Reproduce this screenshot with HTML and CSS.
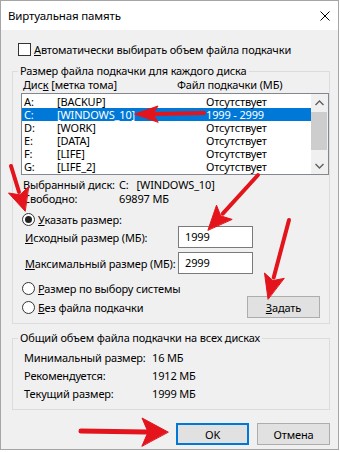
FILE: index.html
```html
<!DOCTYPE html>
<html lang="ru">
<head>
    <meta charset="UTF-8">
    <title>Виртуальная память</title>
    <link rel="stylesheet" href="styles.css">
</head>
<body>
    <div class="window">
        <!-- заголовок -->
        <div class="titlebar">
            <span class="title">Виртуальная память</span>
            <svg class="close" width="10" height="10" viewBox="0 0 10 10">
                <path d="M0.5 0.5 L9.5 9.5 M9.5 0.5 L0.5 9.5" stroke="#000" stroke-width="1" fill="none"/>
            </svg>
        </div>

        <div class="content">
            <div class="check-row">
                <span class="checkbox"></span>
                <span><u>А</u>втоматически выбирать объем файла подкачки</span>
            </div>

            <!-- размер для каждого диска -->
            <fieldset class="group">
                <legend>Размер файла подкачки для каждого диска</legend>
                <div class="list-head">
                    <span>Дис<u>к</u> [метка тома]</span>
                    <span>Файл подкачки (МБ)</span>
                </div>
                <div class="listbox">
                    <div class="rows">
                        <div class="row"><span>A:</span><span>[BACKUP]</span><span>Отсутствует</span></div>
                        <div class="row selected"><span>C:</span><span>[WINDOWS_10]</span><span>1999 - 2999</span></div>
                        <div class="row"><span>D:</span><span>[WORK]</span><span>Отсутствует</span></div>
                        <div class="row"><span>E:</span><span>[DATA]</span><span>Отсутствует</span></div>
                        <div class="row"><span>F:</span><span>[LIFE]</span><span>Отсутствует</span></div>
                        <div class="row"><span>G:</span><span>[LIFE_2]</span><span>Отсутствует</span></div>
                    </div>
                    <div class="scrollbar">
                        <div class="sb-arrow">
                            <svg width="9" height="6" viewBox="0 0 9 6"><path d="M0.5 5 L4.5 1 L8.5 5" stroke="#606060" stroke-width="1.4" fill="none"/></svg>
                        </div>
                        <div class="sb-thumb"></div>
                        <div class="sb-space"></div>
                        <div class="sb-arrow">
                            <svg width="9" height="6" viewBox="0 0 9 6"><path d="M0.5 1 L4.5 5 L8.5 1" stroke="#606060" stroke-width="1.4" fill="none"/></svg>
                        </div>
                    </div>
                </div>

                <div class="info">
                    <div class="info-row"><span>Выбранный диск:</span><span>C:<span class="gap"></span>[WINDOWS_10]</span></div>
                    <div class="info-row"><span>Свободно:</span><span>69897 МБ</span></div>
                </div>

                <div class="radio-row first">
                    <span class="radio checked"></span>
                    <span><u>У</u>казать размер:</span>
                </div>
                <div class="size-row">
                    <span class="size-label"><u>И</u>сходный размер (МБ):</span>
                    <div class="input">1999</div>
                </div>
                <div class="size-row second">
                    <span class="size-label"><u>М</u>аксимальный размер (МБ):</span>
                    <div class="input">2999</div>
                </div>

                <div class="bottom-row">
                    <div class="radios">
                        <div class="radio-row">
                            <span class="radio"></span>
                            <span><u>Р</u>азмер по выбору системы</span>
                        </div>
                        <div class="radio-row">
                            <span class="radio"></span>
                            <span><u>Б</u>ез файла подкачки</span>
                        </div>
                    </div>
                    <button class="btn btn-set"><u>З</u>адать</button>
                </div>
            </fieldset>

            <!-- общий объем -->
            <fieldset class="group total">
                <legend>Общий объем файла подкачки на всех дисках</legend>
                <div class="total-row"><span>Минимальный размер:</span><span>16 МБ</span></div>
                <div class="total-row"><span>Рекомендуется:</span><span>1912 МБ</span></div>
                <div class="total-row"><span>Текущий размер:</span><span>1999 МБ</span></div>
            </fieldset>

            <div class="buttons">
                <button class="btn default">OK</button>
                <button class="btn">Отмена</button>
            </div>
        </div>
    </div>

    <!-- красные стрелки поверх окна -->
    <svg class="arrows" width="340" height="452" viewBox="0 0 340 452">
        <g fill="#e3141b" stroke="#e3141b" stroke-linecap="round" stroke-linejoin="round">
            <!-- к диску C -->
            <line x1="204" y1="113" x2="154" y2="114" stroke-width="4"/>
            <polygon points="135,114 158,106 153,114 158,122" stroke-width="1"/>
            <!-- к переключателю -->
            <line x1="11" y1="166" x2="19" y2="192" stroke-width="4"/>
            <polygon points="25,211 8.5,193 20,194.8 28.5,186.8" stroke-width="1"/>
            <!-- к исходному размеру -->
            <line x1="258" y1="175" x2="222.8" y2="213.7" stroke-width="4"/>
            <polygon points="208,230 216.5,205.2 220.8,215.9 231.8,219.3" stroke-width="1"/>
            <!-- к кнопке Задать -->
            <line x1="289" y1="220" x2="273.7" y2="277.5" stroke-width="4"/>
            <polygon points="268,299 264.5,273 272.9,280.6 283.9,278.4" stroke-width="1"/>
            <!-- к OK -->
            <line x1="81" y1="431" x2="146" y2="432" stroke-width="5"/>
            <polygon points="168,432 142,418 148,432 142,446" stroke-width="1"/>
        </g>
    </svg>
</body>
</html>
```

FILE: styles.css
```css
* {
    box-sizing: border-box;
}

body {
    margin: 0;
    position: relative;
    background: #fff;
    font-family: "Noto Sans", "Open Sans", sans-serif;
    font-size: 11px;
    letter-spacing: -0.15px;
    color: #000;
    white-space: nowrap;
}

u {
    text-decoration-thickness: 1px;
}

/* окно */
.window {
    width: 339px;
    border: 1px solid #a5a5a5;
    background: #f0f0f0;
}
.titlebar {
    height: 29px;
    background: #fff;
    display: flex;
    align-items: center;
    justify-content: space-between;
    padding: 0 8px 1px 7px;
}
.title {
    font-size: 11.5px;
}
.close {
    display: block;
    margin-top: 1px;
}

.content {
    padding: 11px 8px 4px 11px;
}

/* флажок */
.check-row {
    display: flex;
    align-items: center;
    gap: 3px;
    height: 16px;
    padding-left: 6px;
}
.checkbox {
    width: 13px;
    height: 13px;
    border: 1px solid #333;
    background: #fff;
}

/* группы */
.group {
    margin: 7px 0 0;
    padding: 0 0 5px 8px;
    border: 1px solid #dcdcdc;
    min-width: 0;
}
.group legend {
    padding: 0 2px;
    margin-left: -3px;
    line-height: 14px;
}

.list-head {
    display: grid;
    grid-template-columns: 154px auto;
    line-height: 14px;
    height: 14px;
    padding-left: 2px;
}

/* список дисков */
.listbox {
    margin-top: 1px;
    height: 82px;
    border: 1px solid #828790;
    background: #fff;
    display: flex;
}
.rows {
    flex: 1;
    padding-top: 1px;
}
.row {
    display: grid;
    grid-template-columns: 33px 149px auto;
    height: 13px;
    line-height: 13px;
    padding-left: 2px;
}
.row.selected {
    background: #0078d7;
    color: #fff;
}
.scrollbar {
    width: 17px;
    background: #f0f0f0;
    display: flex;
    flex-direction: column;
}
.sb-arrow {
    height: 17px;
    display: flex;
    align-items: center;
    justify-content: center;
}
.sb-arrow svg {
    display: block;
}
.sb-thumb {
    height: 38px;
    margin: 1px 1px 0 0;
    background: #cdcdcd;
}
.sb-space {
    flex: 1;
}

/* выбранный диск */
.info {
    margin-top: 3px;
    padding-left: 2px;
}
.info-row {
    display: grid;
    grid-template-columns: 96px auto;
    line-height: 14px;
}
.gap {
    display: inline-block;
    width: 8px;
}

/* переключатели */
.radio-row {
    display: flex;
    align-items: center;
    gap: 3px;
    height: 14px;
    padding-left: 1px;
}
.radio-row.first {
    margin-top: 6px;
}
.radio {
    position: relative;
    width: 13px;
    height: 13px;
    border: 1px solid #333;
    border-radius: 50%;
    background: #fff;
}
.radio.checked::after {
    content: "";
    position: absolute;
    left: 2px;
    top: 2px;
    width: 7px;
    height: 7px;
    border-radius: 50%;
    background: #222;
}

/* поля размера */
.size-row {
    display: flex;
    align-items: center;
    height: 22px;
    padding-left: 4px;
}
.size-row.second {
    margin-top: 4px;
}
.size-label {
    width: 153px;
}
.input {
    width: 75px;
    height: 22px;
    border: 1px solid #7a7a7a;
    background: #fff;
    padding-left: 6px;
    line-height: 20px;
}

.bottom-row {
    display: flex;
    align-items: flex-end;
    justify-content: space-between;
    margin-top: 7px;
}
.radios {
    display: flex;
    flex-direction: column;
    gap: 5px;
    padding-bottom: 4px;
}

/* кнопки */
.btn {
    font: inherit;
    letter-spacing: inherit;
    color: #000;
    width: 73px;
    height: 22px;
    padding: 0;
    background: #e1e1e1;
    border: 1px solid #adadad;
}
.btn-set {
    margin-right: 9px;
}
.btn.default {
    border: 2px solid #0078d7;
}

/* общий объем */
.group.total {
    padding-bottom: 6px;
}
.total-row {
    display: grid;
    grid-template-columns: 128px auto;
    line-height: 18px;
    padding-left: 3px;
}
.total-row:first-of-type {
    margin-top: 4px;
}

.buttons {
    display: flex;
    justify-content: flex-end;
    gap: 8px;
    margin-top: 13px;
}

.arrows {
    position: absolute;
    left: 0;
    top: 0;
    pointer-events: none;
}
```
